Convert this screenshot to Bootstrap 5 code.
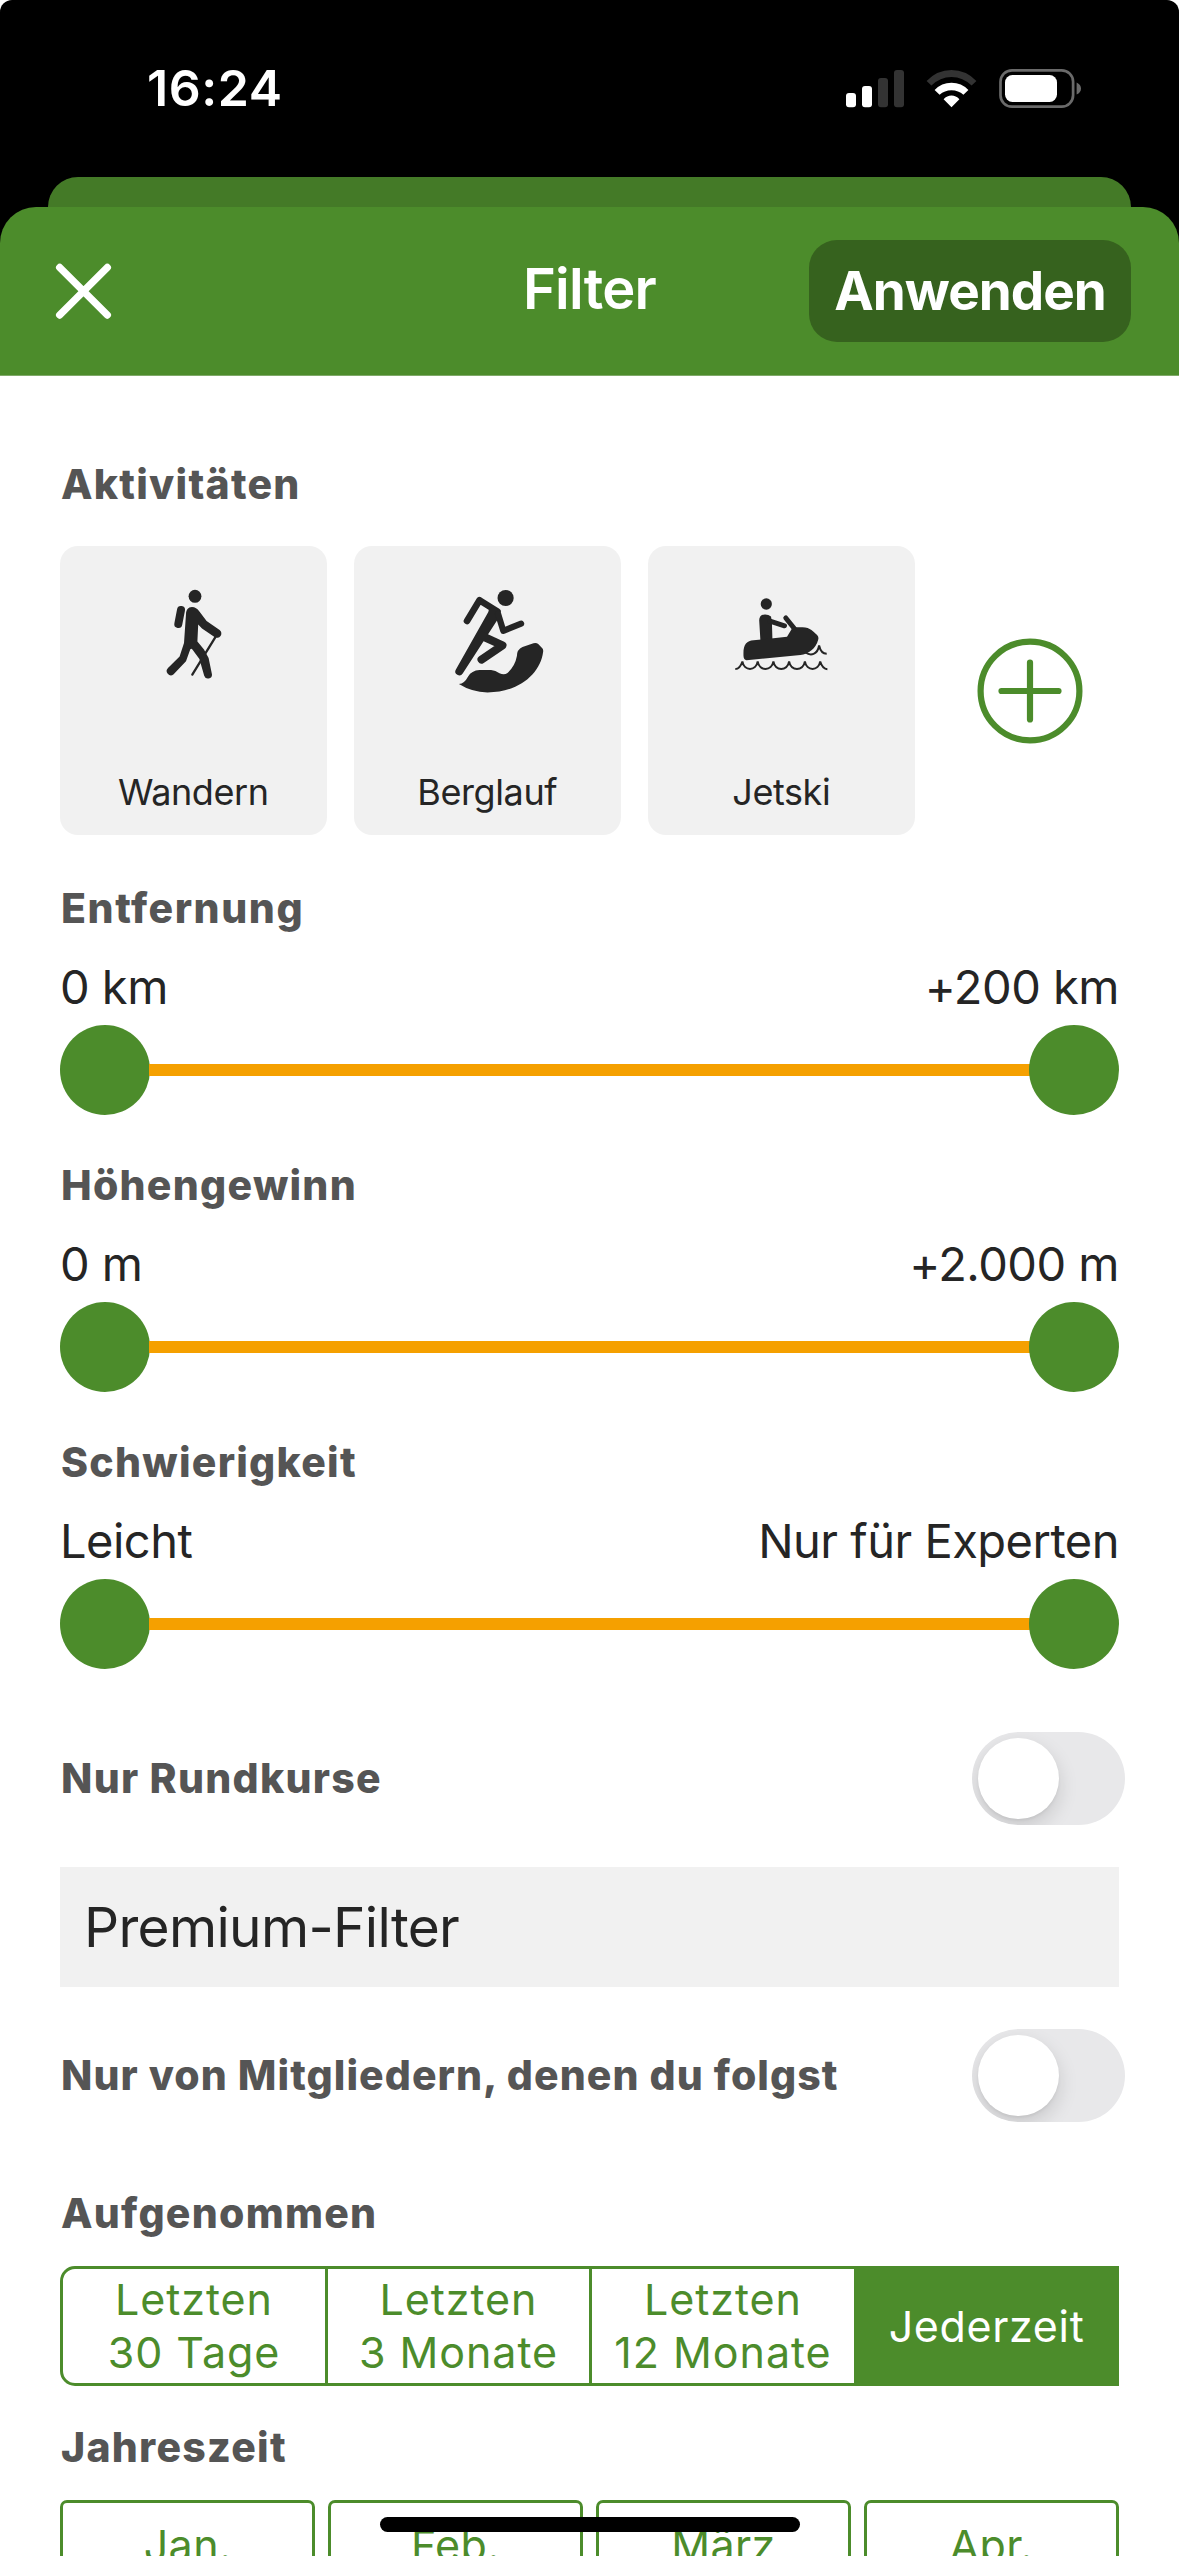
<!DOCTYPE html>
<html lang="de">
<head>
<meta charset="utf-8">
<meta name="viewport" content="width=device-width, initial-scale=1">
<title>Filter</title>
<link href="https://cdn.jsdelivr.net/npm/bootstrap@5.3.0/dist/css/bootstrap.min.css" rel="stylesheet">
<style>
:root{--leaf:#4c8c2b;--ink:#252525;--soft:#f1f1f1}
html,body{height:2556px;overflow:hidden}
body{font-family:Inter,"Liberation Sans",sans-serif;color:var(--ink);background:#fff}
.screen{height:2556px}
.top-area{height:376px;background:#000;border-radius:12px 12px 0 0}
.status-bar{height:177px;padding:0 98px 0 147px}
.clock{font-size:50px;line-height:60px;font-weight:600;letter-spacing:.55px;padding-bottom:2px}
.sheet-back{height:30px;margin:0 48px;background:#447a27;border-radius:32px 32px 0 0}
.sheet-head{height:169px;background:var(--leaf);border-radius:36px 36px 0 0;border-bottom:1px solid #7fa968;padding:0 48px 0 55px}
.head-side{flex:1 1 0}
.head-title{font-size:56px;line-height:68px;font-weight:600;letter-spacing:-.75px;padding:0 7px 4px 0}
.apply-btn,.apply-btn:hover{width:322px;height:102px;border:0;border-radius:28px;background:#36621e;color:#fff;font-size:53px;line-height:60px;font-weight:700;letter-spacing:-1px;padding:0 0 1px}
.content{padding:83px 60px 0}
.sec{font-size:41px;line-height:50px;font-weight:800;color:#555;letter-spacing:1.25px;margin:0;padding-left:1px;white-space:nowrap}
.sec-wide{letter-spacing:1.55px}
.sec-tight{letter-spacing:1.04px}
.act-row{gap:27.4px;margin-top:37px}
.act-card{width:266.6px;height:289px;background:var(--soft);border:0;border-radius:18px;padding:34px 0 21px}
.act-card span{font-size:36px;line-height:44px;letter-spacing:-.4px}
.add-btn{margin-left:28px}
.range-sec{margin-top:45px}
.range-sec.first{margin-top:48px}
.range-vals{margin-top:26px;font-size:47px;line-height:56px;letter-spacing:-.5px}
.slider{height:90px;margin-top:10px}
.knob{width:90px;height:90px;background:var(--leaf)}
.track{height:12px;background:#f5a000;margin:0 -1px}
.switch-row{height:93px;margin-right:-6px}
.switch-row.loops{margin-top:63px}
.switch-row .sec{padding-bottom:1px}
.toggle{width:153px;height:93px;border-radius:47px;background:#e8e8ea;padding:6px;overflow:hidden}
.thumb{width:81px;height:81px;background:#fff;box-shadow:0 8px 20px rgba(0,0,0,.14),0 2px 3px rgba(0,0,0,.05)}
.premium{height:120px;margin:42px 0;background:var(--soft);font-size:55px;letter-spacing:-.68px;padding-left:24px}
.recorded{margin-top:66px}
.season{margin-top:36px}
.seg{display:grid;grid-template-columns:265px 264px 262px 1fr;height:120px;margin-top:28px;border:3px solid var(--leaf);border-radius:15px 0 0 15px;color:var(--leaf);font-size:43px;line-height:53px;letter-spacing:.95px}
.seg>div{border-right:3px solid var(--leaf)}
.seg>div:nth-child(3){border:0}
.seg>div:last-child{border:0;background:var(--leaf);color:#fff;letter-spacing:.65px;padding-left:3px}
.months{gap:12.4px;margin-top:28px}
.months>div{flex:1 1 0;height:90px;border:3px solid var(--leaf);border-radius:7px;color:var(--leaf);font-size:43px;letter-spacing:.4px}
.home-bar{left:380px;top:2517px;width:420px;height:15px;background:#000}
</style>
</head>
<body>
<div class="screen position-relative overflow-hidden">
  <div class="top-area">
    <div class="status-bar d-flex align-items-center justify-content-between text-white">
      <span class="clock">16:24</span>
      <svg width="236" height="42" viewBox="845 67 236 42">
        <g fill="#fff"><rect x="846" y="92" width="10" height="14.3" rx="3"/><rect x="862" y="85" width="10" height="21.3" rx="3"/></g>
        <g fill="#333"><rect x="878" y="77" width="10" height="29.3" rx="3"/><rect x="894" y="69" width="10" height="37.3" rx="3"/></g>
        <path fill="#333" d="M926.6 80Q937 69 951.5 69T976.4 80L971.6 84.6Q963 76 951.5 76T931.4 84.6Z"/>
        <path fill="#fff" d="M934.6 89Q941.5 81.8 951.5 81.8T968.4 89L963.4 93.8Q958.5 89.2 951.5 89.2T939.6 93.8ZM943.6 98.2Q947 94.6 951.5 94.6T959.4 98.2L951.5 106.2Z"/>
        <rect x="1000.5" y="69.3" width="72.6" height="36.4" rx="11.5" fill="none" stroke="#6a6a6a" stroke-width="2.7"/>
        <rect x="1005" y="74" width="52" height="27" rx="7.5" fill="#fff"/>
        <path fill="#6a6a6a" d="M1076.6 81.5Q1081 83.5 1081 87.5T1076.6 93.5Z"/>
      </svg>
    </div>
    <div class="sheet-back"></div>
    <div class="sheet-head d-flex align-items-center text-white">
      <div class="head-side d-flex">
        <svg width="57" height="57" viewBox="0 0 57 57" fill="none" stroke="#fff" stroke-width="7.4" stroke-linecap="round"><path d="M4.7 4.5 52.3 52M52.3 4.5 4.7 52"/></svg>
      </div>
      <div class="head-title">Filter</div>
      <div class="head-side d-flex justify-content-end"><button class="btn apply-btn">Anwenden</button></div>
    </div>
  </div>

  <main class="content">
    <h2 class="sec">Aktivitäten</h2>
    <div class="act-row d-flex align-items-center">
      <div class="act-card card align-items-center justify-content-between">
        <svg width="120" height="120" viewBox="-27 0 120 120" fill="#252525">
          <ellipse cx="35" cy="16.3" rx="6.4" ry="6.5"/>
          <path d="M21 30 18.3 44" stroke="#252525" stroke-width="8" stroke-linecap="round"/>
          <path d="M32 27C28 27 26.2 30 26 34L24 63 19.6 76.5 8 88A4.2 4.2 0 0 0 13.4 94.4L26 81.2 30.2 69.5Q31.2 67.8 32.4 69.5L39.4 79 44.2 95.8A4 4 0 0 0 52 94.4L48.6 78 44 69.5 37.4 61.5 38.2 44.5 42 48.4 54.5 57A4.3 4.3 0 0 0 59.6 50L46.6 41 39.4 31.5Q36.4 27 32 27Z"/>
          <path d="M55.7 56.7 32.3 94.6" stroke="#252525" stroke-width="2.3" stroke-linecap="round"/>
        </svg>
        <span>Wandern</span>
      </div>
      <div class="act-card card align-items-center justify-content-between">
        <svg width="120" height="120" viewBox="-22.5 0 120 120" fill="none" stroke="#252525" stroke-linecap="round" stroke-linejoin="round">
          <circle cx="56.1" cy="18" r="8.1" fill="#252525" stroke="none"/>
          <path stroke-width="6.6" d="M17.5 41 30 20.2 48 31.5"/>
          <path fill="#252525" stroke="none" d="M40 27 48.4 28.4Q51.6 31 50.4 36L13.2 93.4A3.9 3.9 0 0 1 6.4 89.4L38.8 32Z"/>
          <path stroke-width="6.2" d="M48.6 34 53.8 50.8 71.6 43.6"/>
          <path stroke-width="8" d="M32.5 56 53 65.4 32 79.6"/>
          <path fill="#252525" stroke="none" d="M9.4 104Q15 103.600 18.6 96.500Q22 90.500 30 90H41.6Q46 90.400 50 93.200Q54.600 95.600 58 93Q65.600 86 67.400 76Q67.400 69.500 73 67L84 63.200Q87 62.400 89 64.200L93 68.600Q94 70 93.600 72C91 93 70 112.400 38 112.400Q22 112 9.400 104Z"/>
        </svg>
        <span>Berglauf</span>
      </div>
      <div class="act-card card align-items-center justify-content-between">
        <svg width="120" height="120" viewBox="-13.5 0 120 120" fill="none" stroke="#252525" stroke-linecap="round">
          <ellipse cx="31.800" cy="24" rx="5.600" ry="5.800" fill="#252525" stroke="none"/>
          <g fill="#252525" stroke="none">
            <path d="M30.400 34.400C26.500 34.400 24.600 37 24.700 40.500L26 62H38L37.400 42 36.500 36.500Q34 34.300 30.400 34.400Z"/>
            <path d="M9 76C8.500 64 12 61 19 60.300L52.500 56.700 57.500 48.500Q58.500 47.300 60 47.300H68C76 47.300 79 52 82.600 55Q84.600 57 83.600 60C81.500 68.500 74 74 66 75L12 80.200Q9.200 80 9 76Z"/>
          </g>
          <path stroke-width="5" d="M35.500 41.200 50 45.800M51.300 38 60 48.800"/>
          <g stroke-width="2" stroke-linecap="butt" stroke-linejoin="miter">
            <path d="M.8 89Q5.500 89 7.900 81.500C9.500 91.500 21.500 91.500 23.200 81.500C25 91.500 37.200 91.500 38.900 81.500C40.600 91.500 52.900 91.500 54.600 81.500C56.300 91.500 68.700 91.500 70.400 81.500C72.100 91.500 84 91.500 85.700 81.500Q88 89 92.900 89.200"/>
            <path d="M71 72.500C76 76 83 75 84.600 65.500Q86.500 73.800 92.200 73.800"/>
          </g>
        </svg>
        <span>Jetski</span>
      </div>
      <svg class="add-btn" width="120" height="120" viewBox="-60 -60 120 120" fill="none" stroke="#4c8c2b" stroke-width="6.200" stroke-linecap="round"><circle r="49.400"/><path d="M-28.500 0H28.500M0 -28.500V28.500"/></svg>
    </div>

    <section class="range-sec first">
      <h2 class="sec sec-wide">Entfernung</h2>
      <div class="range-vals d-flex justify-content-between"><span>0 km</span><span>+200 km</span></div>
      <div class="slider d-flex align-items-center"><div class="knob rounded-circle"></div><div class="track flex-grow-1"></div><div class="knob rounded-circle"></div></div>
    </section>
    <section class="range-sec">
      <h2 class="sec">Höhengewinn</h2>
      <div class="range-vals d-flex justify-content-between"><span>0 m</span><span>+2.000 m</span></div>
      <div class="slider d-flex align-items-center"><div class="knob rounded-circle"></div><div class="track flex-grow-1"></div><div class="knob rounded-circle"></div></div>
    </section>
    <section class="range-sec">
      <h2 class="sec">Schwierigkeit</h2>
      <div class="range-vals d-flex justify-content-between"><span>Leicht</span><span>Nur für Experten</span></div>
      <div class="slider d-flex align-items-center"><div class="knob rounded-circle"></div><div class="track flex-grow-1"></div><div class="knob rounded-circle"></div></div>
    </section>

    <div class="switch-row loops d-flex align-items-center justify-content-between">
      <h2 class="sec">Nur Rundkurse</h2>
      <div class="toggle"><div class="thumb rounded-circle"></div></div>
    </div>
    <div class="premium d-flex align-items-center">Premium-Filter</div>
    <div class="switch-row d-flex align-items-center justify-content-between">
      <h2 class="sec sec-tight">Nur von Mitgliedern, denen du folgst</h2>
      <div class="toggle"><div class="thumb rounded-circle"></div></div>
    </div>

    <h2 class="sec recorded">Aufgenommen</h2>
    <div class="seg text-center">
      <div class="d-flex align-items-center justify-content-center">Letzten<br>30 Tage</div>
      <div class="d-flex align-items-center justify-content-center">Letzten<br>3 Monate</div>
      <div class="d-flex align-items-center justify-content-center">Letzten<br>12 Monate</div>
      <div class="d-flex align-items-center justify-content-center">Jederzeit</div>
    </div>

    <h2 class="sec season">Jahreszeit</h2>
    <div class="months d-flex">
      <div class="d-flex align-items-center justify-content-center">Jan.</div>
      <div class="d-flex align-items-center justify-content-center">Feb.</div>
      <div class="d-flex align-items-center justify-content-center">März</div>
      <div class="d-flex align-items-center justify-content-center">Apr.</div>
    </div>
  </main>
  <div class="home-bar position-absolute rounded-pill"></div>
</div>
<script src="https://cdn.jsdelivr.net/npm/bootstrap@5.3.0/dist/js/bootstrap.bundle.min.js"></script>
</body>
</html>
